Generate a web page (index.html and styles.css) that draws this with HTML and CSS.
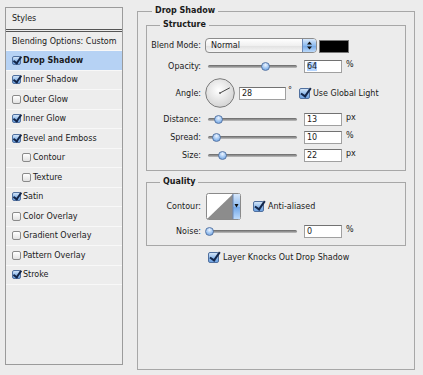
FILE: index.html
```html
<!DOCTYPE html>
<html lang="en">
<head>
  <meta charset="UTF-8" />
  <title>Layer Style - Drop Shadow</title>
  <link rel="stylesheet" href="styles.css">
</head>
<body>
  <div class="dialog">
    <div class="styles-list">
      <div class="list-head">Styles</div>
      <div class="list-row blend">Blending Options: Custom</div>
      <div class="list-row selected"><span class="box checked"></span>Drop Shadow</div>
      <div class="list-row"><span class="box checked"></span>Inner Shadow</div>
      <div class="list-row"><span class="box"></span>Outer Glow</div>
      <div class="list-row"><span class="box checked"></span>Inner Glow</div>
      <div class="list-row"><span class="box checked"></span>Bevel and Emboss</div>
      <div class="list-row sub"><span class="box"></span>Contour</div>
      <div class="list-row sub"><span class="box"></span>Texture</div>
      <div class="list-row"><span class="box checked"></span>Satin</div>
      <div class="list-row"><span class="box"></span>Color Overlay</div>
      <div class="list-row"><span class="box"></span>Gradient Overlay</div>
      <div class="list-row"><span class="box"></span>Pattern Overlay</div>
      <div class="list-row"><span class="box checked"></span>Stroke</div>
    </div>

    <fieldset class="group outer">
      <legend>Drop Shadow</legend>

      <fieldset class="group structure">
        <legend>Structure</legend>

        <div class="row first">
          <span class="label">Blend Mode:</span>
          <div class="select">
            <span class="value">Normal</span>
            <span class="stepper">
              <svg width="7" height="9" viewBox="0 0 7 9"><path d="M3.5 0.5 L6 3.5 L1 3.5 Z M3.5 8.5 L6 5.5 L1 5.5 Z" fill="#111"/></svg>
            </span>
          </div>
          <span class="swatch"></span>
        </div>

        <div class="row opacity">
          <span class="label">Opacity:</span>
          <div class="slider"><span class="track"></span><span class="thumb" style="left: 65%"></span></div>
          <div class="field"><span class="sel">64</span></div>
          <span class="unit">%</span>
        </div>

        <div class="row angle">
          <span class="label">Angle:</span>
          <svg class="dial" width="30" height="30" viewBox="0 0 30 30">
            <defs>
              <radialGradient id="dialFill" cx="45%" cy="40%" r="60%">
                <stop offset="0" stop-color="#ffffff"/>
                <stop offset="1" stop-color="#d4d4d4"/>
              </radialGradient>
            </defs>
            <circle cx="15" cy="15" r="14.3" fill="url(#dialFill)" stroke="#7b7b7b" stroke-width="1"/>
            <line x1="15" y1="15" x2="24.8" y2="9.8" stroke="#444" stroke-width="1"/>
            <circle cx="15" cy="15" r="1" fill="#666"/>
          </svg>
          <div class="field wide">28</div>
          <span class="deg">°</span>
          <label class="check-label global"><span class="box big checked"></span>Use Global Light</label>
        </div>

        <div class="row">
          <span class="label">Distance:</span>
          <div class="slider"><span class="track"></span><span class="thumb" style="left: 12%"></span></div>
          <div class="field">13</div>
          <span class="unit">px</span>
        </div>

        <div class="row">
          <span class="label">Spread:</span>
          <div class="slider"><span class="track"></span><span class="thumb" style="left: 10%"></span></div>
          <div class="field">10</div>
          <span class="unit">%</span>
        </div>

        <div class="row">
          <span class="label">Size:</span>
          <div class="slider"><span class="track"></span><span class="thumb" style="left: 16%"></span></div>
          <div class="field">22</div>
          <span class="unit">px</span>
        </div>
      </fieldset>

      <fieldset class="group quality">
        <legend>Quality</legend>

        <div class="row contour first">
          <span class="label">Contour:</span>
          <svg class="contour-pick" width="35" height="27" viewBox="0 0 35 27">
            <defs>
              <linearGradient id="btnFill" x1="0" y1="0" x2="0" y2="1">
                <stop offset="0" stop-color="#d8e8fb"/>
                <stop offset="0.5" stop-color="#8dbbef"/>
                <stop offset="0.51" stop-color="#6fa5e6"/>
                <stop offset="1" stop-color="#bcdafb"/>
              </linearGradient>
            </defs>
            <rect x="0.5" y="0.5" width="34" height="26" rx="2" fill="#fff" stroke="#8a8a8a"/>
            <path d="M1 26 L27 1 L27 26 Z" fill="#8c8c8c"/>
            <rect x="27" y="1" width="7" height="25" fill="url(#btnFill)"/>
            <line x1="27" y1="1" x2="27" y2="26" stroke="#6b87b5"/>
            <path d="M28.5 11 L32.5 11 L30.5 14.5 Z" fill="#111"/>
          </svg>
          <label class="check-label anti"><span class="box big checked"></span>Anti-aliased</label>
        </div>

        <div class="row">
          <span class="label">Noise:</span>
          <div class="slider"><span class="track"></span><span class="thumb" style="left: 2%"></span></div>
          <div class="field">0</div>
          <span class="unit">%</span>
        </div>
      </fieldset>

      <label class="check-label knockout"><span class="box big checked"></span>Layer Knocks Out Drop Shadow</label>
    </fieldset>
  </div>
</body>
</html>
```

FILE: styles.css
```css
body {
  margin: 0;
  background: #ececec;
  font-family: "DejaVu Sans", sans-serif;
  font-size: 8px;
  color: #1a1a1a;
}

.dialog {
  display: flex;
  align-items: flex-start;
  padding-left: 5px;
}

/* left styles list */
.styles-list {
  width: 118px;
  height: 358px;
  margin-top: 7px;
  box-sizing: border-box;
  border: 1px solid #9b9b9b;
  background: #ededed;
}

.list-head {
  height: 21px;
  line-height: 21px;
  padding-left: 6px;
  border-bottom: 3px double #555;
}

.list-row {
  height: 19.5px;
  box-sizing: border-box;
  display: flex;
  align-items: center;
  gap: 2px;
  padding-left: 6px;
  border-bottom: 1px solid #f8f8f8;
}

.list-row.blend {
  height: 19px;
}

.list-row.sub {
  padding-left: 16px;
}

.list-row.selected {
  background: #b6d2f4;
  font-weight: bold;
}

/* checkboxes */
.box {
  position: relative;
  flex: none;
  width: 9px;
  height: 9px;
  box-sizing: border-box;
  border: 1px solid #8a8a8a;
  border-radius: 2px;
  background: linear-gradient(#ffffff, #e2e2e2);
}

.box.big {
  width: 11px;
  height: 11px;
}

.box.checked {
  border-color: #50709f;
  background: linear-gradient(#d3e5f8, #8cb8ea 55%, #6fa3e2);
}

.box.checked::after {
  content: "";
  position: absolute;
  left: 2px;
  top: -2px;
  width: 3px;
  height: 7px;
  border: solid #13264a;
  border-width: 0 2px 2px 0;
  transform: rotate(35deg);
}

.box.big.checked::after {
  left: 3px;
  top: -3px;
  width: 4px;
  height: 9px;
}

/* group boxes */
.group {
  margin: 0;
  padding: 0;
  min-width: 0;
  box-sizing: border-box;
  border: 1px solid #a7a7a7;
}

.group legend {
  font-weight: bold;
  line-height: 10px;
  padding: 0 3px;
  margin-left: 13px;
}

.outer {
  width: 278px;
  height: 364px;
  margin: 6px 0 0 14px;
  padding: 4px 8px 0;
}

.outer > legend {
  margin-left: 6px;
}

.structure {
  padding: 8px 0 8px;
}

.quality {
  margin-top: 6px;
  padding: 6px 0 7px;
}

/* rows */
.row {
  display: flex;
  align-items: center;
  height: 13px;
  margin-top: 5px;
}

.row.first {
  margin-top: 0;
  height: 15px;
}

.row.opacity {
  margin-top: 7px;
}

.row.angle {
  height: 30px;
}

.row.contour {
  height: 27px;
}

.label {
  flex: none;
  width: 54px;
  text-align: right;
}

.select {
  display: flex;
  width: 112px;
  height: 15px;
  margin-left: 4px;
  box-sizing: border-box;
  border: 1px solid #8c8c8c;
  border-radius: 4px;
  overflow: hidden;
  background: linear-gradient(#ffffff, #f0f0f0 50%, #e0e0e0 51%, #f6f6f6);
}

.select .value {
  flex: 1;
  padding-left: 5px;
  line-height: 13px;
}

.select .stepper {
  width: 13px;
  display: flex;
  align-items: center;
  justify-content: center;
  border-left: 1px solid #6b87b5;
  background: linear-gradient(#d8e8fb, #8dbbef 50%, #6fa5e6 51%, #bcdafb);
}

.swatch {
  align-self: flex-end;
  width: 30px;
  height: 13px;
  margin-left: 2px;
  box-sizing: border-box;
  border: 1px solid #777;
  background: #000;
}

.slider {
  position: relative;
  flex: none;
  width: 89px;
  height: 9px;
  margin-left: 7px;
}

.slider .track {
  position: absolute;
  left: 0;
  right: 0;
  top: 3px;
  height: 3px;
  border-radius: 2px;
  background: linear-gradient(#666, #9a9a9a 60%, #c2c2c2);
}

.slider .thumb {
  position: absolute;
  top: 0;
  width: 9px;
  height: 9px;
  margin-left: -4.5px;
  box-sizing: border-box;
  border: 1px solid #5877a6;
  border-radius: 50%;
  background: radial-gradient(circle at 50% 30%, #eef5ff, #9cc3f0 55%, #5f95d8);
}

.field {
  flex: none;
  width: 38px;
  height: 13px;
  margin-left: 7px;
  padding-left: 2px;
  box-sizing: border-box;
  border: 1px solid #a0a0a0;
  border-top-color: #727272;
  background: #fff;
  line-height: 11px;
}

.field.wide {
  width: 47px;
  margin-left: 4px;
}

.field .sel {
  background: #b5d5ff;
}

.unit {
  align-self: flex-start;
  margin-left: 4px;
  line-height: 9px;
}

.dial {
  flex: none;
  margin-left: 4px;
}

.deg {
  margin: 0 0 6px 2px;
}

.check-label {
  display: flex;
  align-items: center;
  gap: 3px;
}

.check-label.global {
  margin-left: 7px;
}

.contour-pick {
  flex: none;
  margin-left: 5px;
}

.check-label.anti {
  margin-left: 12px;
  gap: 4px;
}

.check-label.knockout {
  margin: 6px 0 0 62px;
  gap: 4px;
}
```
